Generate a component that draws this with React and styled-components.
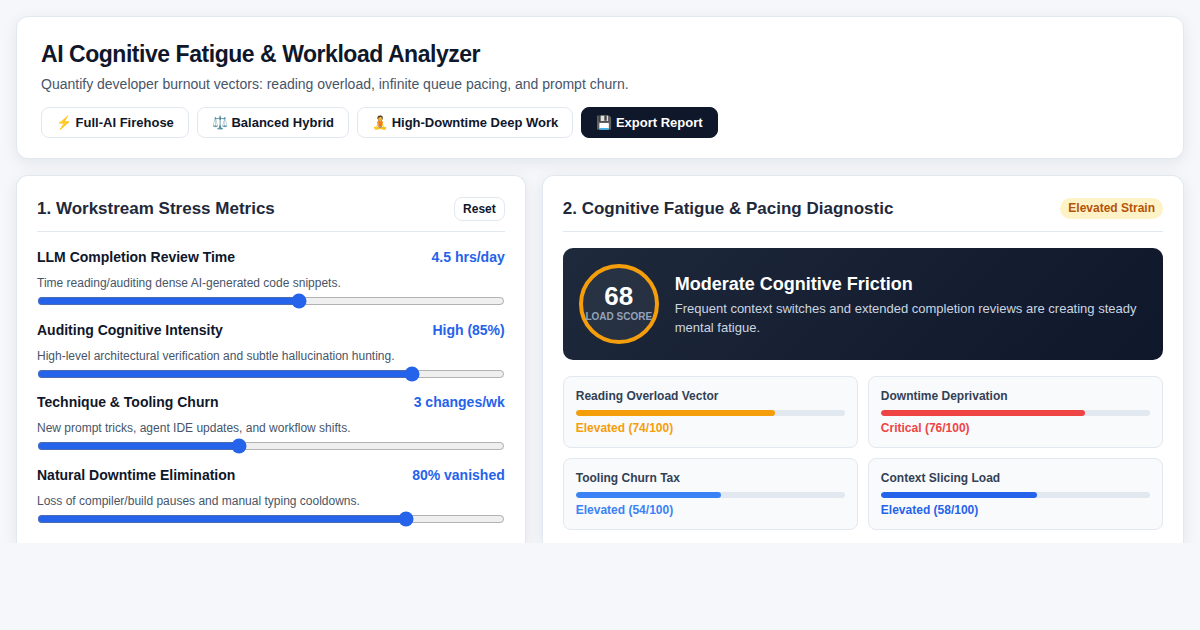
import React, { useState } from "react";
import styled, { createGlobalStyle } from "styled-components";

const GlobalStyle = createGlobalStyle`
  *, *::before, *::after { box-sizing: border-box; }
  body {
    margin: 0;
    background: #f5f7fb;
    color: #0f172a;
    font-family: "Liberation Sans", Arial, sans-serif;
  }
  h1, h2, h3, p { margin: 0; }
  button { font-family: inherit; cursor: pointer; }
`;

const Page = styled.main`
  display: flex;
  flex-direction: column;
  gap: 16px;
  padding: 16px 16px 0;
  overflow: hidden;
`;

const Header = styled.header`
  padding: 20px 24px;
  background: #ffffff;
  border: 1px solid #e2e8f0;
  border-radius: 12px;
  box-shadow: 0 4px 16px rgba(15, 23, 42, 0.08);
`;

const Title = styled.h1`
  font-size: 23px;
  line-height: 34px;
  letter-spacing: -0.02em;
`;

const Subtitle = styled.p`
  margin-top: 3px;
  font-size: 14px;
  line-height: 21px;
  color: #475569;
`;

const Toolbar = styled.div`
  display: flex;
  flex-wrap: wrap;
  gap: 8px;
  margin-top: 12px;
`;

const Button = styled.button`
  padding: ${(p) => (p.$small ? "4px 8px" : "7px 14px")};
  font-size: ${(p) => (p.$small ? 12 : 13)}px;
  line-height: ${(p) => (p.$small ? 14 : 15)}px;
  font-weight: 600;
  color: ${(p) => (p.$primary ? "#ffffff" : "#0f172a")};
  background: ${(p) => (p.$primary ? "#0f172a" : "#ffffff")};
  border: 1px solid ${(p) => (p.$primary ? "#0f172a" : "#e2e8f0")};
  border-radius: 8px;
`;

const Columns = styled.div`
  display: grid;
  grid-template-columns: 1fr 1.26fr;
  gap: 16px;
`;

const Panel = styled.section`
  display: flex;
  flex-direction: column;
  min-width: 0;
  padding: 20px 20px 13px;
  background: #ffffff;
  border: 1px solid #e2e8f0;
  border-bottom: 0;
  border-radius: 12px 12px 0 0;
  box-shadow: 0 4px 16px rgba(15, 23, 42, 0.08);
`;

const PanelHeader = styled.div`
  display: flex;
  align-items: center;
  justify-content: space-between;
  height: 36px;
  padding-bottom: 10px;
  margin-bottom: 16px;
  border-bottom: 1px solid #e2e8f0;
`;

const PanelTitle = styled.h2`
  font-size: 17px;
  line-height: 24px;
  color: #1e293b;
`;

const Badge = styled.span`
  padding: 3px 8px;
  font-size: 12px;
  line-height: 15px;
  font-weight: 700;
  color: #b45309;
  background: #fef3c7;
  border-radius: 12px;
`;

const MetricList = styled.div`
  display: flex;
  flex: 1;
  flex-direction: column;
  justify-content: space-between;
`;

const Metric = styled.div`
  display: flex;
  flex-direction: column;
  padding-bottom: 3px;
`;

const MetricTop = styled.div`
  display: flex;
  justify-content: space-between;
  font-size: 14px;
  line-height: 19px;
  font-weight: 600;
`;

const MetricValue = styled.output`
  color: #2563eb;
`;

const MetricHint = styled.p`
  margin: 8px 0 1px;
  font-size: 12px;
  line-height: 17px;
  color: #475569;
`;

const Slider = styled.input`
  width: 100%;
  height: 16px;
  margin: 0;
  accent-color: #2563eb;
  cursor: pointer;
`;

const Summary = styled.div`
  display: flex;
  align-items: center;
  gap: 16px;
  padding: 16px;
  color: #ffffff;
  background: linear-gradient(135deg, #1e293b, #0f172a);
  border-radius: 10px;
`;

const ScoreRing = styled.div`
  display: flex;
  flex: none;
  flex-direction: column;
  align-items: center;
  justify-content: center;
  width: 80px;
  height: 80px;
  background: rgba(255, 255, 255, 0.05);
  border: 4px solid #f59e0b;
  border-radius: 50%;
`;

const Score = styled.span`
  font-size: 26px;
  line-height: 26px;
  font-weight: 800;
`;

const ScoreCaption = styled.span`
  font-size: 10px;
  line-height: 16px;
  font-weight: 600;
  color: #94a3b8;
  white-space: nowrap;
`;

const SummaryTitle = styled.h3`
  font-size: 18px;
  line-height: 24px;
`;

const SummaryText = styled.p`
  margin-top: 3px;
  font-size: 13px;
  line-height: 19px;
  color: #cbd5e1;
`;

const VectorGrid = styled.div`
  display: grid;
  grid-template-columns: 1fr 1fr;
  gap: 10px;
  margin-top: 16px;
`;

const VectorCard = styled.div`
  padding: 10px 12px;
  background: #f8fafc;
  border: 1px solid #e2e8f0;
  border-radius: 8px;
`;

const VectorTitle = styled.h3`
  font-size: 12px;
  line-height: 18px;
  color: #334155;
`;

const Track = styled.div`
  height: 6px;
  margin: 5px 0 4px;
  overflow: hidden;
  background: #e2e8f0;
  border-radius: 3px;
`;

const Fill = styled.div`
  height: 100%;
  background: ${(p) => p.$color};
  border-radius: 3px;
`;

const VectorStatus = styled.p`
  font-size: 12px;
  line-height: 17px;
  font-weight: 700;
  color: ${(p) => p.$color};
`;

const METRICS = [
  {
    id: "review",
    label: "LLM Completion Review Time",
    hint: "Time reading/auditing dense AI-generated code snippets.",
    min: 0,
    max: 8,
    step: 0.5,
    value: 4.5,
    format: (v) => `${v} hrs/day`,
  },
  {
    id: "intensity",
    label: "Auditing Cognitive Intensity",
    hint: "High-level architectural verification and subtle hallucination hunting.",
    min: 20,
    max: 100,
    step: 5,
    value: 85,
    format: (v) => `${v >= 70 ? "High" : v >= 45 ? "Medium" : "Low"} (${v}%)`,
  },
  {
    id: "churn",
    label: "Technique & Tooling Churn",
    hint: "New prompt tricks, agent IDE updates, and workflow shifts.",
    min: 0,
    max: 7,
    step: 1,
    value: 3,
    format: (v) => `${v} changes/wk`,
  },
  {
    id: "downtime",
    label: "Natural Downtime Elimination",
    hint: "Loss of compiler/build pauses and manual typing cooldowns.",
    min: 0,
    max: 100,
    step: 5,
    value: 80,
    format: (v) => `${v}% vanished`,
  },
];

const VECTORS = [
  { title: "Reading Overload Vector", level: "Elevated", score: 74, color: "#f59e0b" },
  { title: "Downtime Deprivation", level: "Critical", score: 76, color: "#ef4444" },
  { title: "Tooling Churn Tax", level: "Elevated", score: 54, color: "#3b82f6" },
  { title: "Context Slicing Load", level: "Elevated", score: 58, color: "#2563eb" },
];

const DEFAULTS = Object.fromEntries(METRICS.map((m) => [m.id, m.value]));

export default function App() {
  const [values, setValues] = useState(DEFAULTS);

  return (
    <>
      <GlobalStyle />
      <Page>
        <Header>
          <Title>AI Cognitive Fatigue &amp; Workload Analyzer</Title>
          <Subtitle>
            Quantify developer burnout vectors: reading overload, infinite queue pacing, and prompt churn.
          </Subtitle>
          <Toolbar>
            <Button type="button">⚡ Full-AI Firehose</Button>
            <Button type="button">⚖️ Balanced Hybrid</Button>
            <Button type="button">🧘 High-Downtime Deep Work</Button>
            <Button type="button" $primary>💾 Export Report</Button>
          </Toolbar>
        </Header>

        <Columns>
          <Panel>
            <PanelHeader>
              <PanelTitle>1. Workstream Stress Metrics</PanelTitle>
              <Button type="button" $small onClick={() => setValues(DEFAULTS)}>Reset</Button>
            </PanelHeader>
            <MetricList>
              {METRICS.map((m) => (
                <Metric key={m.id}>
                  <MetricTop>
                    <label htmlFor={m.id}>{m.label}</label>
                    <MetricValue htmlFor={m.id}>{m.format(values[m.id])}</MetricValue>
                  </MetricTop>
                  <MetricHint>{m.hint}</MetricHint>
                  <Slider
                    id={m.id}
                    type="range"
                    min={m.min}
                    max={m.max}
                    step={m.step}
                    value={values[m.id]}
                    onChange={(e) => setValues({ ...values, [m.id]: Number(e.target.value) })}
                  />
                </Metric>
              ))}
            </MetricList>
          </Panel>

          <Panel>
            <PanelHeader>
              <PanelTitle>2. Cognitive Fatigue &amp; Pacing Diagnostic</PanelTitle>
              <Badge>Elevated Strain</Badge>
            </PanelHeader>
            <Summary>
              <ScoreRing>
                <Score>68</Score>
                <ScoreCaption>LOAD SCORE</ScoreCaption>
              </ScoreRing>
              <div>
                <SummaryTitle>Moderate Cognitive Friction</SummaryTitle>
                <SummaryText>
                  Frequent context switches and extended completion reviews are creating steady mental fatigue.
                </SummaryText>
              </div>
            </Summary>
            <VectorGrid>
              {VECTORS.map((v) => (
                <VectorCard key={v.title}>
                  <VectorTitle>{v.title}</VectorTitle>
                  <Track>
                    <Fill $color={v.color} style={{ width: `${v.score}%` }} />
                  </Track>
                  <VectorStatus $color={v.color}>
                    {v.level} ({v.score}/100)
                  </VectorStatus>
                </VectorCard>
              ))}
            </VectorGrid>
          </Panel>
        </Columns>
      </Page>
    </>
  );
}
